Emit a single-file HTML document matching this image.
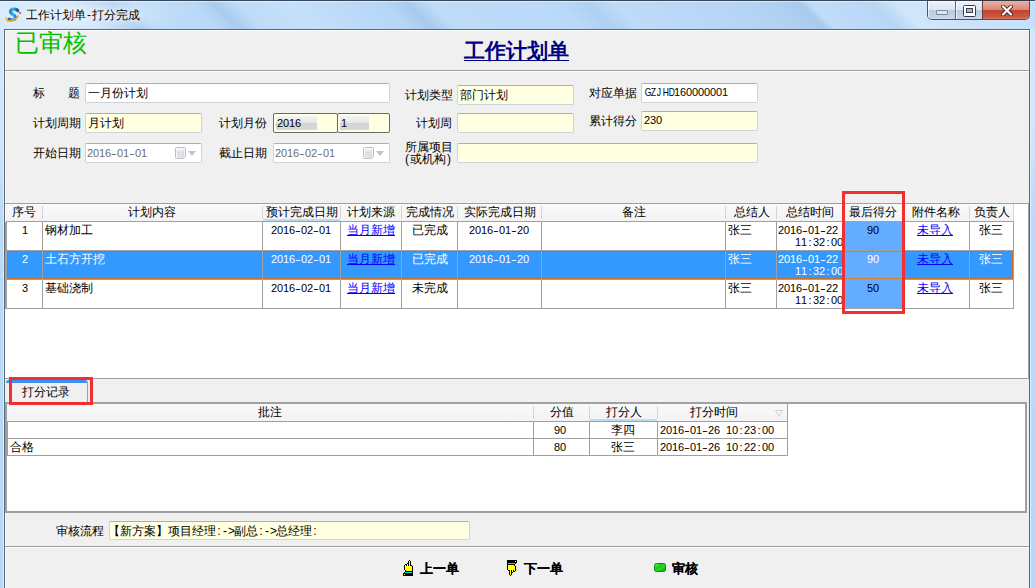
<!DOCTYPE html>
<html><head><meta charset="utf-8">
<style>
*{box-sizing:border-box;margin:0;padding:0}
html,body{width:1035px;height:588px;overflow:hidden}
body{position:relative;font-family:"Liberation Sans",sans-serif;font-size:12px;color:#000;
background:radial-gradient(ellipse 110px 22px at 80px 14px,rgba(255,255,255,.45),rgba(255,255,255,0)),linear-gradient(100deg,#d6e9fb 0px,#cde4fa 80px,#b3d3f2 112px,#a9cbee 128px,#bcdcf8 150px,#b8d8f6 208px,#a8caed 226px,#bddcf8 246px,#c3e0fa 300px,#b5d6f5 398px,#a6c9ec 418px,#bddcf8 440px,#b9d9f7 575px,#adcff0 598px,#bddcf8 622px,#b7d7f5 775px,#a5c8eb 805px,#c2dff9 835px,#d0e6fb 900px,#c3dff9 1035px);}
.a{position:absolute}
.t{position:absolute;font-size:12px;line-height:12px;white-space:nowrap}
.m{font-family:"Liberation Sans",sans-serif;font-size:11px;margin-top:-2px}
.m i{display:inline-block;width:6px;text-align:center;font-style:normal}
.m i.h{transform:scaleX(1.6)}
.m i.u{transform:scaleX(.78)}
.box{position:absolute;border:1px solid #ccd3dc;border-top-color:#a9b0b8;border-radius:2px;background:#fff}
.yel{background:#ffffe1}
.hl{position:absolute;height:1px;background:#a0a0a0}
.vl{position:absolute;width:1px;background:#a0a0a0}
.link{color:#0000ff;text-decoration:underline}
</style></head><body>

<!-- window frame top -->
<div class="a" style="left:0;top:0;width:1035px;height:29px;background:radial-gradient(ellipse 110px 22px at 80px 14px,rgba(255,255,255,.45),rgba(255,255,255,0)),linear-gradient(45deg,#d6e9fb 10px,#cde4fa 67px,#b5d4f2 88px,#abcdef 98px,#bddcf8 113px,#b9d9f6 155px,#aacbee 169px,#bedcf8 185px,#c4e0fa 222px,#b6d6f5 289px,#a8caed 306px,#bedcf8 322px,#bad9f7 413px,#afd0f1 433px,#bedcf8 452px,#b4d3f2 554px,#a8caed 584px,#bfddf9 591px,#bcdaf7 618px,#b7d6f3 636px,#d0e6fa 653px,#c4dff9 742px)"></div>
<div class="a" style="left:0;top:0;width:1035px;height:1px;background:#37475a"></div>
<div class="a" style="left:0;top:1px;width:1035px;height:1px;background:rgba(255,255,255,.55)"></div>

<!-- title icon -->
<svg class="a" style="left:3px;top:5px" width="20" height="20" viewBox="0 0 20 20">
<defs><linearGradient id="sg" x1="0" y1="0" x2="1" y2="0"><stop offset="0" stop-color="#1a6fc0"/><stop offset=".45" stop-color="#3ab4f0"/><stop offset="1" stop-color="#0b4f9e"/></linearGradient></defs>
<path d="M14.6 5.4 C12.8 3.4 7.6 3.6 7.7 6.9 C7.8 9.7 12.6 9.7 12.4 12.5 C12.2 14.9 8.4 15.2 6.4 14.3" fill="none" stroke="url(#sg)" stroke-width="3.3" stroke-linecap="round"/>
<path d="M3.4 13 C3 17.2 9.5 17.2 15.4 11" fill="none" stroke="#f5a21e" stroke-width="1.6" stroke-linecap="round"/>
<path d="M16.5 7.5 L17 6.5 L17.5 7.5 L18.5 8 L17.5 8.5 L17 9.5 L16.5 8.5 L15.5 8Z" fill="#d81e1e"/>
</svg>
<div class="t" style="left:26px;top:9px;text-shadow:0 0 6px #fff,0 0 3px #fff">工作计划单<span style="display:inline-block;width:6px;text-align:center">-</span>打分完成</div>

<!-- window buttons -->
<div class="a" style="left:927px;top:0;width:103px;height:20px;border:1px solid #4a5566;border-top-color:#303a48;border-radius:0 0 5px 5px;overflow:hidden">
  <div class="a" style="left:0;top:0;width:28px;height:19px;background:linear-gradient(#edf2f9 0%,#dde6f1 45%,#b9cbe0 50%,#c4d5e8 85%,#d6e3f1 100%);border-right:1px solid #5d6a7b;box-shadow:inset 1px 1px 0 rgba(255,255,255,.7)"></div>
  <div class="a" style="left:8px;top:9px;width:12px;height:5px;background:#dfe6ee;border:1px solid #7d8a9c;border-radius:1px"></div>
  <div class="a" style="left:28px;top:0;width:27px;height:19px;background:linear-gradient(#edf2f9 0%,#dde6f1 45%,#b9cbe0 50%,#c4d5e8 85%,#d6e3f1 100%);border-right:1px solid #6b3a34;box-shadow:inset 1px 1px 0 rgba(255,255,255,.7)"></div>
  <svg class="a" style="left:35px;top:4px" width="13" height="12" viewBox="0 0 13 12"><rect x="0.5" y="0.5" width="12" height="11" rx="1" fill="#fff" stroke="#353f4d"/><rect x="3.5" y="3.5" width="6" height="4" fill="#a8bad0" stroke="#353f4d"/></svg>
  <div class="a" style="left:55px;top:0;width:48px;height:19px;background:linear-gradient(#eab0a4 0%,#dc8a78 45%,#c3432c 50%,#cc5a44 85%,#de8a76 100%)"></div>
  <svg class="a" style="left:73px;top:4px" width="12" height="11" viewBox="0 0 12 11"><path d="M2 1.5 L10 9.5 M10 1.5 L2 9.5" stroke="#4a2a2a" stroke-width="4" stroke-linecap="round"/><path d="M2 1.5 L10 9.5 M10 1.5 L2 9.5" stroke="#fff" stroke-width="2.2" stroke-linecap="round"/></svg>
</div>

<!-- client area -->
<div class="a" style="left:0;top:29px;width:3px;height:559px;background:linear-gradient(#d4e8fc 0px,#cfe5fa 120px,#bfdcf9 165px,#b9d9f8 260px,#b8d8f8 559px)"></div>
<div class="a" style="left:3px;top:29px;width:1px;height:559px;background:#dcefff"></div>
<div class="a" style="left:1030px;top:29px;width:1px;height:559px;background:#dcefff"></div>
<div class="a" style="left:1031px;top:29px;width:4px;height:559px;background:linear-gradient(#d4e8fc 0px,#cfe5fa 120px,#bfdcf9 165px,#b9d9f8 260px,#b8d8f8 559px)"></div>
<div class="a" style="left:4px;top:29px;width:1026px;height:560px;background:#f0f0f0;border:1px solid #5b6878;border-bottom:none"></div>


<!-- header panel -->
<div class="a" style="left:5px;top:30px;width:1024px;height:1px;background:#fff"></div>
<div class="a" style="left:5px;top:30px;width:1px;height:558px;background:#fff"></div>
<div class="t" style="left:15px;top:31px;font-size:24px;line-height:24px;font-weight:300;color:#00c000">已审核</div>
<div class="t" style="left:464px;top:40px;font-size:21px;line-height:21px;font-weight:bold;color:#000080;text-decoration:underline;text-decoration-thickness:1px;text-underline-offset:2px">工作计划单</div>
<div class="hl" style="left:5px;top:70px;width:1024px"></div>
<div class="a" style="left:5px;top:71px;width:1024px;height:1px;background:#fff"></div>

<!-- form row 1 -->
<div class="t" style="left:33px;top:87px">标</div><div class="t" style="left:68px;top:87px">题</div>
<div class="box" style="left:85px;top:83px;width:305px;height:20px"></div>
<div class="t" style="left:88px;top:87px">一月份计划</div>
<div class="t" style="left:405px;top:89px">计划类型</div>
<div class="box yel" style="left:457px;top:85px;width:117px;height:20px"></div>
<div class="t" style="left:460px;top:89px">部门计划</div>
<div class="t" style="left:589px;top:87px">对应单据</div>
<div class="box" style="left:641px;top:83px;width:117px;height:20px"></div>
<div class="t m" style="left:644px;top:88px"><i class="u">G</i><i class="u">Z</i><i class="u">J</i><i class="u">H</i><i class="u">D</i><i>1</i><i>6</i><i>0</i><i>0</i><i>0</i><i>0</i><i>0</i><i>0</i><i>1</i></div>

<!-- form row 2 -->
<div class="t" style="left:33px;top:117px">计划周期</div>
<div class="box yel" style="left:85px;top:113px;width:117px;height:20px"></div>
<div class="t" style="left:88px;top:117px">月计划</div>
<div class="t" style="left:219px;top:117px">计划月份</div>
<div class="a" style="left:273px;top:113px;width:65px;height:20px;background:#ffffe1;border:1px solid #6a6a6a;border-radius:2px"></div>
<div class="a" style="left:276px;top:116px;width:41px;height:14px;background:linear-gradient(#f3f3f3 0%,#e6e6e6 50%,#d2d2d2 51%,#dadada 100%)"></div>
<div class="t m" style="left:277px;top:119px"><i>2</i><i>0</i><i>1</i><i>6</i></div>
<div class="a" style="left:337px;top:113px;width:53px;height:20px;background:#ffffe1;border:1px solid #6a6a6a;border-radius:2px"></div>
<div class="a" style="left:340px;top:116px;width:29px;height:14px;background:linear-gradient(#f3f3f3 0%,#e6e6e6 50%,#d2d2d2 51%,#dadada 100%)"></div>
<div class="t m" style="left:341px;top:119px"><i>1</i></div>
<div class="t" style="left:416px;top:117px">计划周</div>
<div class="box yel" style="left:457px;top:113px;width:117px;height:20px"></div>
<div class="t" style="left:589px;top:115px">累计得分</div>
<div class="box yel" style="left:641px;top:111px;width:117px;height:20px"></div>
<div class="t m" style="left:644px;top:116px"><i>2</i><i>3</i><i>0</i></div>

<!-- form row 3 -->
<div class="t" style="left:33px;top:147px">开始日期</div>
<div class="box" style="left:85px;top:143px;width:117px;height:20px"></div>
<div class="t m" style="left:87px;top:149px;color:#6d6d6d"><i>2</i><i>0</i><i>1</i><i>6</i><i class="h">-</i><i>0</i><i>1</i><i class="h">-</i><i>0</i><i>1</i></div>
<svg class="a" style="left:175px;top:147px" width="12" height="13" viewBox="0 0 12 13"><path d="M1.5 0.5H9.5Q10.5 0.5 10.5 1.5V9L8.5 11.5H1.5Q0.5 11.5 0.5 10.5V1.5Q0.5 0.5 1.5 0.5Z" fill="#f2f6fd" stroke="#c4bdbd"/><rect x="2" y="3.5" width="7" height="7" fill="#d9dade"/><rect x="2.5" y="4" width="1" height="1" fill="#f8f8fa"/><rect x="2.5" y="6" width="1" height="1" fill="#f8f8fa"/><rect x="2.5" y="8" width="1" height="1" fill="#f8f8fa"/><rect x="4.5" y="4" width="1" height="1" fill="#f8f8fa"/><rect x="4.5" y="6" width="1" height="1" fill="#f8f8fa"/><rect x="4.5" y="8" width="1" height="1" fill="#f8f8fa"/><rect x="6.5" y="4" width="1" height="1" fill="#f8f8fa"/><rect x="6.5" y="6" width="1" height="1" fill="#f8f8fa"/><rect x="6.5" y="8" width="1" height="1" fill="#f8f8fa"/></svg>
<svg class="a" style="left:188px;top:151px" width="8" height="5"><path d="M0 0H8L4 5Z" fill="#c4c4bc"/></svg>
<div class="t" style="left:219px;top:147px">截止日期</div>
<div class="box" style="left:273px;top:143px;width:117px;height:20px"></div>
<div class="t m" style="left:275px;top:149px;color:#6d6d6d"><i>2</i><i>0</i><i>1</i><i>6</i><i class="h">-</i><i>0</i><i>2</i><i class="h">-</i><i>0</i><i>1</i></div>
<svg class="a" style="left:363px;top:147px" width="12" height="13" viewBox="0 0 12 13"><path d="M1.5 0.5H9.5Q10.5 0.5 10.5 1.5V9L8.5 11.5H1.5Q0.5 11.5 0.5 10.5V1.5Q0.5 0.5 1.5 0.5Z" fill="#f2f6fd" stroke="#c4bdbd"/><rect x="2" y="3.5" width="7" height="7" fill="#d9dade"/><rect x="2.5" y="4" width="1" height="1" fill="#f8f8fa"/><rect x="2.5" y="6" width="1" height="1" fill="#f8f8fa"/><rect x="2.5" y="8" width="1" height="1" fill="#f8f8fa"/><rect x="4.5" y="4" width="1" height="1" fill="#f8f8fa"/><rect x="4.5" y="6" width="1" height="1" fill="#f8f8fa"/><rect x="4.5" y="8" width="1" height="1" fill="#f8f8fa"/><rect x="6.5" y="4" width="1" height="1" fill="#f8f8fa"/><rect x="6.5" y="6" width="1" height="1" fill="#f8f8fa"/><rect x="6.5" y="8" width="1" height="1" fill="#f8f8fa"/></svg>
<svg class="a" style="left:376px;top:151px" width="8" height="5"><path d="M0 0H8L4 5Z" fill="#c4c4bc"/></svg>
<div class="t" style="left:405px;top:141px;line-height:12px">所属项目</div>
<div class="t" style="left:404px;top:153px;line-height:12px"><span style="display:inline-block;width:6px;text-align:center">(</span>或机构<span style="display:inline-block;width:6px;text-align:center">)</span></div>
<div class="box yel" style="left:457px;top:143px;width:301px;height:20px"></div>

<div class="a" style="left:5px;top:203px;width:1024px;height:175px;background:#fff"></div>
<div class="hl" style="left:5px;top:203px;width:1024px"></div>
<div class="a" style="left:6px;top:204px;width:1008px;height:17px;background:linear-gradient(#f9f9f9,#f3f3f3)"></div>
<div class="hl" style="left:6px;top:221px;width:1008px"></div>
<div class="a" style="left:263px;top:219px;width:77px;height:2px;background:#bcdcf4"></div>
<div class="t" style="left:12px;top:206px">序号</div>
<div class="t" style="left:128px;top:206px">计划内容</div>
<div class="vl" style="left:42px;top:206px;height:13px;background:#d5d5d5"></div>
<div class="t" style="left:266px;top:206px">预计完成日期</div>
<div class="vl" style="left:262px;top:206px;height:13px;background:#d5d5d5"></div>
<div class="t" style="left:347px;top:206px">计划来源</div>
<div class="vl" style="left:340px;top:206px;height:13px;background:#d5d5d5"></div>
<div class="t" style="left:406px;top:206px">完成情况</div>
<div class="vl" style="left:401px;top:206px;height:13px;background:#d5d5d5"></div>
<div class="t" style="left:464px;top:206px">实际完成日期</div>
<div class="vl" style="left:457px;top:206px;height:13px;background:#d5d5d5"></div>
<div class="t" style="left:622px;top:206px">备注</div>
<div class="vl" style="left:541px;top:206px;height:13px;background:#d5d5d5"></div>
<div class="t" style="left:734px;top:206px">总结人</div>
<div class="vl" style="left:725px;top:206px;height:13px;background:#d5d5d5"></div>
<div class="t" style="left:786px;top:206px">总结时间</div>
<div class="vl" style="left:776px;top:206px;height:13px;background:#d5d5d5"></div>
<div class="t" style="left:849px;top:206px">最后得分</div>
<div class="vl" style="left:842px;top:206px;height:13px;background:#d5d5d5"></div>
<div class="t" style="left:912px;top:206px">附件名称</div>
<div class="vl" style="left:903px;top:206px;height:13px;background:#d5d5d5"></div>
<div class="t" style="left:974px;top:206px">负责人</div>
<div class="vl" style="left:969px;top:206px;height:13px;background:#d5d5d5"></div>
<div class="vl" style="left:1013px;top:204px;height:17px;background:#d5d5d5"></div>
<div class="a" style="left:5px;top:222px;width:2px;height:87px;background:#a0a0a0"></div>
<div class="a" style="left:846px;top:222px;width:56px;height:86px;background:#63acff"></div>
<div class="a" style="left:7px;top:251px;width:1006px;height:28px;background:#3399ff"></div>
<div class="a" style="left:846px;top:251px;width:56px;height:28px;background:#63acff"></div>
<div class="a" style="left:7px;top:251px;width:1006px;height:28px;border:1px dotted #c86a1e"></div>
<div class="hl" style="left:7px;top:308px;width:1007px"></div>
<div class="hl" style="left:7px;top:250px;width:1007px"></div>
<div class="hl" style="left:7px;top:279px;width:1007px"></div>
<div class="vl" style="left:42px;top:222px;height:86px"></div>
<div class="vl" style="left:262px;top:222px;height:86px"></div>
<div class="vl" style="left:340px;top:222px;height:86px"></div>
<div class="vl" style="left:401px;top:222px;height:86px"></div>
<div class="vl" style="left:457px;top:222px;height:86px"></div>
<div class="vl" style="left:541px;top:222px;height:86px"></div>
<div class="vl" style="left:725px;top:222px;height:86px"></div>
<div class="vl" style="left:776px;top:222px;height:86px"></div>
<div class="vl" style="left:845px;top:222px;height:86px"></div>
<div class="vl" style="left:902px;top:222px;height:86px"></div>
<div class="vl" style="left:969px;top:222px;height:86px"></div>
<div class="vl" style="left:1013px;top:222px;height:87px"></div>
<div class="t m" style="left:22px;top:226px;color:#000"><i>1</i></div>
<div class="t" style="left:45px;top:224px;color:#000">钢材加工</div>
<div class="t m" style="left:271px;top:226px;color:#000"><i>2</i><i>0</i><i>1</i><i>6</i><i class="h">-</i><i>0</i><i>2</i><i class="h">-</i><i>0</i><i>1</i></div>
<div class="t link" style="left:347px;top:224px">当月新增</div>
<div class="t" style="left:412px;top:224px;color:#000">已完成</div>
<div class="t m" style="left:469px;top:226px;color:#000"><i>2</i><i>0</i><i>1</i><i>6</i><i class="h">-</i><i>0</i><i>1</i><i class="h">-</i><i>2</i><i>0</i></div>
<div class="t" style="left:728px;top:224px;color:#000">张三</div>
<div class="t m" style="left:778px;top:226px;color:#000"><i>2</i><i>0</i><i>1</i><i>6</i><i class="h">-</i><i>0</i><i>1</i><i class="h">-</i><i>2</i><i>2</i></div>
<div class="t m" style="left:795px;top:238px;color:#000"><i>1</i><i>1</i><i>:</i><i>3</i><i>2</i><i>:</i><i>0</i><i>0</i></div>
<div class="t m" style="left:867px;top:226px;color:#000"><i>9</i><i>0</i></div>
<div class="t link" style="left:917px;top:224px">未导入</div>
<div class="t" style="left:979px;top:224px;color:#000">张三</div>
<div class="t m" style="left:22px;top:255px;color:#fff"><i>2</i></div>
<div class="t" style="left:45px;top:253px;color:#fff">土石方开挖</div>
<div class="t m" style="left:271px;top:255px;color:#fff"><i>2</i><i>0</i><i>1</i><i>6</i><i class="h">-</i><i>0</i><i>2</i><i class="h">-</i><i>0</i><i>1</i></div>
<div class="t link" style="left:347px;top:253px">当月新增</div>
<div class="t" style="left:412px;top:253px;color:#fff">已完成</div>
<div class="t m" style="left:469px;top:255px;color:#fff"><i>2</i><i>0</i><i>1</i><i>6</i><i class="h">-</i><i>0</i><i>1</i><i class="h">-</i><i>2</i><i>0</i></div>
<div class="t" style="left:728px;top:253px;color:#fff">张三</div>
<div class="t m" style="left:778px;top:255px;color:#fff"><i>2</i><i>0</i><i>1</i><i>6</i><i class="h">-</i><i>0</i><i>1</i><i class="h">-</i><i>2</i><i>2</i></div>
<div class="t m" style="left:795px;top:267px;color:#fff"><i>1</i><i>1</i><i>:</i><i>3</i><i>2</i><i>:</i><i>0</i><i>0</i></div>
<div class="t m" style="left:867px;top:255px;color:#fff"><i>9</i><i>0</i></div>
<div class="t link" style="left:917px;top:253px">未导入</div>
<div class="t" style="left:979px;top:253px;color:#fff">张三</div>
<div class="t m" style="left:22px;top:284px;color:#000"><i>3</i></div>
<div class="t" style="left:45px;top:282px;color:#000">基础浇制</div>
<div class="t m" style="left:271px;top:284px;color:#000"><i>2</i><i>0</i><i>1</i><i>6</i><i class="h">-</i><i>0</i><i>2</i><i class="h">-</i><i>0</i><i>1</i></div>
<div class="t link" style="left:347px;top:282px">当月新增</div>
<div class="t" style="left:412px;top:282px;color:#000">未完成</div>
<div class="t" style="left:728px;top:282px;color:#000">张三</div>
<div class="t m" style="left:778px;top:284px;color:#000"><i>2</i><i>0</i><i>1</i><i>6</i><i class="h">-</i><i>0</i><i>1</i><i class="h">-</i><i>2</i><i>2</i></div>
<div class="t m" style="left:795px;top:296px;color:#000"><i>1</i><i>1</i><i>:</i><i>3</i><i>2</i><i>:</i><i>0</i><i>0</i></div>
<div class="t m" style="left:867px;top:284px;color:#000"><i>5</i><i>0</i></div>
<div class="t link" style="left:917px;top:282px">未导入</div>
<div class="t" style="left:979px;top:282px;color:#000">张三</div>
<div class="a" style="left:842px;top:191px;width:63px;height:123px;border:3px solid #f03030;z-index:5"></div>
<div class="hl" style="left:5px;top:378px;width:1024px"></div>
<div class="vl" style="left:1028px;top:203px;height:175px"></div>
<div class="a" style="left:5px;top:379px;width:1024px;height:24px;background:#f0f0f0"></div>
<div class="a" style="left:6px;top:380px;width:82px;height:23px;background:#f0f0f0;border-right:1px solid #a0a0a0;border-top-left-radius:3px;border-top-right-radius:3px;overflow:hidden"><div class="a" style="left:0;top:0;width:82px;height:3px;background:#3c8ff0"></div></div>
<div class="t" style="left:22px;top:386px">打分记录</div>
<div class="a" style="left:9px;top:377px;width:84px;height:28px;border:3px solid #f03030;z-index:5"></div>
<div class="a" style="left:5px;top:402px;width:1022px;height:111px;background:#fff;border:2px solid #a0a0a0"></div>
<div class="a" style="left:7px;top:404px;width:780px;height:17px;background:linear-gradient(#f9f9f9,#f3f3f3)"></div>
<div class="hl" style="left:7px;top:421px;width:780px"></div>
<div class="a" style="left:590px;top:419px;width:67px;height:2px;background:#bcdcf4"></div>
<div class="t" style="left:258px;top:406px">批注</div>
<div class="t" style="left:550px;top:406px">分值</div>
<div class="vl" style="left:533px;top:406px;height:13px;background:#d5d5d5"></div>
<div class="t" style="left:606px;top:406px">打分人</div>
<div class="vl" style="left:589px;top:406px;height:13px;background:#d5d5d5"></div>
<div class="t" style="left:690px;top:406px">打分时间</div>
<div class="vl" style="left:657px;top:406px;height:13px;background:#d5d5d5"></div>
<svg class="a" style="left:775px;top:410px" width="8" height="7"><path d="M0.5 0.5H7.5L4 6.5Z" fill="none" stroke="#cfcfcf"/></svg>
<div class="vl" style="left:787px;top:404px;height:52px"></div>
<div class="hl" style="left:7px;top:438px;width:780px"></div>
<div class="vl" style="left:7px;top:421px;height:35px"></div>
<div class="hl" style="left:7px;top:455px;width:781px"></div>
<div class="vl" style="left:533px;top:422px;height:33px"></div>
<div class="vl" style="left:589px;top:422px;height:33px"></div>
<div class="vl" style="left:657px;top:422px;height:33px"></div>
<div class="t m" style="left:554px;top:426px"><i>9</i><i>0</i></div>
<div class="t" style="left:611px;top:424px">李四</div>
<div class="t m" style="left:660px;top:426px"><i>2</i><i>0</i><i>1</i><i>6</i><i class="h">-</i><i>0</i><i>1</i><i class="h">-</i><i>2</i><i>6</i><i>&nbsp;</i><i>1</i><i>0</i><i>:</i><i>2</i><i>3</i><i>:</i><i>0</i><i>0</i></div>
<div class="t" style="left:10px;top:441px">合格</div>
<div class="t m" style="left:554px;top:443px"><i>8</i><i>0</i></div>
<div class="t" style="left:611px;top:441px">张三</div>
<div class="t m" style="left:660px;top:443px"><i>2</i><i>0</i><i>1</i><i>6</i><i class="h">-</i><i>0</i><i>1</i><i class="h">-</i><i>2</i><i>6</i><i>&nbsp;</i><i>1</i><i>0</i><i>:</i><i>2</i><i>2</i><i>:</i><i>0</i><i>0</i></div>
<div class="t" style="left:56px;top:525px">审核流程</div>
<div class="box yel" style="left:109px;top:521px;width:361px;height:19px"></div>
<div class="t" style="left:108px;top:525px">【新方案】项目经理<span style="display:inline-block;width:6px;text-align:center">:</span><span style="display:inline-block;width:6px;text-align:center">-</span><span style="display:inline-block;width:6px;text-align:center">&gt;</span>副总<span style="display:inline-block;width:6px;text-align:center">:</span><span style="display:inline-block;width:6px;text-align:center">-</span><span style="display:inline-block;width:6px;text-align:center">&gt;</span>总经理<span style="display:inline-block;width:6px;text-align:center">:</span></div>
<div class="hl" style="left:5px;top:546px;width:1024px"></div>
<div class="a" style="left:5px;top:547px;width:1024px;height:1px;background:#fff"></div>
<svg class="a" style="left:403px;top:560px" width="11" height="16" viewBox="0 0 11 16" shape-rendering="crispEdges"><rect x="6" y="0" width="1" height="1" fill="#000"/><rect x="5" y="1" width="1" height="1" fill="#000"/><rect x="6" y="1" width="1" height="1" fill="#ffffff"/><rect x="7" y="1" width="1" height="1" fill="#000"/><rect x="5" y="2" width="1" height="1" fill="#000"/><rect x="6" y="2" width="1" height="1" fill="#ffff00"/><rect x="7" y="2" width="1" height="1" fill="#000"/><rect x="4" y="3" width="1" height="1" fill="#000"/><rect x="5" y="3" width="1" height="1" fill="#000"/><rect x="6" y="3" width="1" height="1" fill="#ffffff"/><rect x="7" y="3" width="1" height="1" fill="#000"/><rect x="2" y="4" width="1" height="1" fill="#000"/><rect x="3" y="4" width="1" height="1" fill="#000"/><rect x="4" y="4" width="1" height="1" fill="#ffff00"/><rect x="5" y="4" width="1" height="1" fill="#000"/><rect x="6" y="4" width="1" height="1" fill="#ffff00"/><rect x="7" y="4" width="1" height="1" fill="#000"/><rect x="1" y="5" width="1" height="1" fill="#000"/><rect x="2" y="5" width="1" height="1" fill="#ffffff"/><rect x="3" y="5" width="1" height="1" fill="#000"/><rect x="4" y="5" width="1" height="1" fill="#ffffff"/><rect x="5" y="5" width="1" height="1" fill="#000"/><rect x="6" y="5" width="1" height="1" fill="#ffffff"/><rect x="7" y="5" width="1" height="1" fill="#000"/><rect x="8" y="5" width="1" height="1" fill="#000"/><rect x="1" y="6" width="1" height="1" fill="#000"/><rect x="2" y="6" width="1" height="1" fill="#ffff00"/><rect x="3" y="6" width="1" height="1" fill="#ffff00"/><rect x="4" y="6" width="1" height="1" fill="#ffff00"/><rect x="5" y="6" width="1" height="1" fill="#ffff00"/><rect x="6" y="6" width="1" height="1" fill="#ffff00"/><rect x="7" y="6" width="1" height="1" fill="#ffff00"/><rect x="8" y="6" width="1" height="1" fill="#ffff00"/><rect x="9" y="6" width="1" height="1" fill="#000"/><rect x="1" y="7" width="1" height="1" fill="#000"/><rect x="2" y="7" width="1" height="1" fill="#ffffff"/><rect x="3" y="7" width="1" height="1" fill="#ffff00"/><rect x="4" y="7" width="1" height="1" fill="#ffffff"/><rect x="5" y="7" width="1" height="1" fill="#ffff00"/><rect x="6" y="7" width="1" height="1" fill="#ffffff"/><rect x="7" y="7" width="1" height="1" fill="#ffff00"/><rect x="8" y="7" width="1" height="1" fill="#ffffff"/><rect x="9" y="7" width="1" height="1" fill="#000"/><rect x="1" y="8" width="1" height="1" fill="#000"/><rect x="2" y="8" width="1" height="1" fill="#ffff00"/><rect x="3" y="8" width="1" height="1" fill="#ffff00"/><rect x="4" y="8" width="1" height="1" fill="#ffff00"/><rect x="5" y="8" width="1" height="1" fill="#ffff00"/><rect x="6" y="8" width="1" height="1" fill="#ffff00"/><rect x="7" y="8" width="1" height="1" fill="#ffff00"/><rect x="8" y="8" width="1" height="1" fill="#ffff00"/><rect x="9" y="8" width="1" height="1" fill="#000"/><rect x="1" y="9" width="1" height="1" fill="#000"/><rect x="2" y="9" width="1" height="1" fill="#ffffff"/><rect x="3" y="9" width="1" height="1" fill="#ffff00"/><rect x="4" y="9" width="1" height="1" fill="#ffffff"/><rect x="5" y="9" width="1" height="1" fill="#ffff00"/><rect x="6" y="9" width="1" height="1" fill="#ffffff"/><rect x="7" y="9" width="1" height="1" fill="#ffff00"/><rect x="8" y="9" width="1" height="1" fill="#ffffff"/><rect x="9" y="9" width="1" height="1" fill="#000"/><rect x="2" y="10" width="1" height="1" fill="#000"/><rect x="3" y="10" width="1" height="1" fill="#ffff00"/><rect x="4" y="10" width="1" height="1" fill="#ffff00"/><rect x="5" y="10" width="1" height="1" fill="#ffff00"/><rect x="6" y="10" width="1" height="1" fill="#ffff00"/><rect x="7" y="10" width="1" height="1" fill="#ffff00"/><rect x="8" y="10" width="1" height="1" fill="#ffff00"/><rect x="9" y="10" width="1" height="1" fill="#000"/><rect x="2" y="11" width="1" height="1" fill="#000"/><rect x="3" y="11" width="1" height="1" fill="#000"/><rect x="4" y="11" width="1" height="1" fill="#000"/><rect x="5" y="11" width="1" height="1" fill="#000"/><rect x="6" y="11" width="1" height="1" fill="#000"/><rect x="7" y="11" width="1" height="1" fill="#000"/><rect x="8" y="11" width="1" height="1" fill="#000"/><rect x="9" y="11" width="1" height="1" fill="#000"/><rect x="1" y="12" width="1" height="1" fill="#000"/><rect x="2" y="12" width="1" height="1" fill="#00e0f0"/><rect x="3" y="12" width="1" height="1" fill="#00e0f0"/><rect x="4" y="12" width="1" height="1" fill="#00e0f0"/><rect x="5" y="12" width="1" height="1" fill="#00e0f0"/><rect x="6" y="12" width="1" height="1" fill="#00e0f0"/><rect x="7" y="12" width="1" height="1" fill="#00e0f0"/><rect x="8" y="12" width="1" height="1" fill="#00e0f0"/><rect x="9" y="12" width="1" height="1" fill="#000"/><rect x="0" y="13" width="1" height="1" fill="#000"/><rect x="1" y="13" width="1" height="1" fill="#000"/><rect x="2" y="13" width="1" height="1" fill="#000"/><rect x="3" y="13" width="1" height="1" fill="#000"/><rect x="4" y="13" width="1" height="1" fill="#000"/><rect x="5" y="13" width="1" height="1" fill="#000"/><rect x="6" y="13" width="1" height="1" fill="#000"/><rect x="7" y="13" width="1" height="1" fill="#000"/><rect x="8" y="13" width="1" height="1" fill="#000"/><rect x="9" y="13" width="1" height="1" fill="#000"/><rect x="0" y="14" width="1" height="1" fill="#000"/><rect x="1" y="14" width="1" height="1" fill="#ffff00"/><rect x="2" y="14" width="1" height="1" fill="#000"/><rect x="3" y="14" width="1" height="1" fill="#000"/><rect x="4" y="14" width="1" height="1" fill="#000"/><rect x="5" y="14" width="1" height="1" fill="#000"/><rect x="6" y="14" width="1" height="1" fill="#000"/><rect x="7" y="14" width="1" height="1" fill="#000"/><rect x="8" y="14" width="1" height="1" fill="#000"/><rect x="9" y="14" width="1" height="1" fill="#000"/><rect x="0" y="15" width="1" height="1" fill="#000"/><rect x="1" y="15" width="1" height="1" fill="#000"/><rect x="2" y="15" width="1" height="1" fill="#000"/><rect x="3" y="15" width="1" height="1" fill="#000"/><rect x="4" y="15" width="1" height="1" fill="#000"/><rect x="5" y="15" width="1" height="1" fill="#000"/><rect x="6" y="15" width="1" height="1" fill="#000"/><rect x="7" y="15" width="1" height="1" fill="#000"/><rect x="8" y="15" width="1" height="1" fill="#000"/><rect x="9" y="15" width="1" height="1" fill="#000"/></svg>
<div class="t" style="left:420px;top:562px;font-size:13px;line-height:13px;font-weight:bold;text-shadow:0.4px 0 0 #000">上一单</div>
<svg class="a" style="left:506px;top:560px" width="11" height="16" viewBox="0 0 11 16" shape-rendering="crispEdges"><rect x="4" y="15" width="1" height="1" fill="#000"/><rect x="5" y="14" width="1" height="1" fill="#000"/><rect x="4" y="14" width="1" height="1" fill="#ffff00"/><rect x="3" y="14" width="1" height="1" fill="#000"/><rect x="5" y="13" width="1" height="1" fill="#000"/><rect x="4" y="13" width="1" height="1" fill="#ffffff"/><rect x="3" y="13" width="1" height="1" fill="#000"/><rect x="6" y="12" width="1" height="1" fill="#000"/><rect x="5" y="12" width="1" height="1" fill="#000"/><rect x="4" y="12" width="1" height="1" fill="#ffff00"/><rect x="3" y="12" width="1" height="1" fill="#000"/><rect x="8" y="11" width="1" height="1" fill="#000"/><rect x="7" y="11" width="1" height="1" fill="#000"/><rect x="6" y="11" width="1" height="1" fill="#ffffff"/><rect x="5" y="11" width="1" height="1" fill="#000"/><rect x="4" y="11" width="1" height="1" fill="#ffffff"/><rect x="3" y="11" width="1" height="1" fill="#000"/><rect x="9" y="10" width="1" height="1" fill="#000"/><rect x="8" y="10" width="1" height="1" fill="#ffff00"/><rect x="7" y="10" width="1" height="1" fill="#000"/><rect x="6" y="10" width="1" height="1" fill="#ffff00"/><rect x="5" y="10" width="1" height="1" fill="#000"/><rect x="4" y="10" width="1" height="1" fill="#ffff00"/><rect x="3" y="10" width="1" height="1" fill="#000"/><rect x="2" y="10" width="1" height="1" fill="#000"/><rect x="9" y="9" width="1" height="1" fill="#000"/><rect x="8" y="9" width="1" height="1" fill="#ffffff"/><rect x="7" y="9" width="1" height="1" fill="#ffff00"/><rect x="6" y="9" width="1" height="1" fill="#ffffff"/><rect x="5" y="9" width="1" height="1" fill="#ffff00"/><rect x="4" y="9" width="1" height="1" fill="#ffffff"/><rect x="3" y="9" width="1" height="1" fill="#ffff00"/><rect x="2" y="9" width="1" height="1" fill="#ffffff"/><rect x="1" y="9" width="1" height="1" fill="#000"/><rect x="9" y="8" width="1" height="1" fill="#000"/><rect x="8" y="8" width="1" height="1" fill="#ffff00"/><rect x="7" y="8" width="1" height="1" fill="#ffff00"/><rect x="6" y="8" width="1" height="1" fill="#ffff00"/><rect x="5" y="8" width="1" height="1" fill="#ffff00"/><rect x="4" y="8" width="1" height="1" fill="#ffff00"/><rect x="3" y="8" width="1" height="1" fill="#ffff00"/><rect x="2" y="8" width="1" height="1" fill="#ffff00"/><rect x="1" y="8" width="1" height="1" fill="#000"/><rect x="9" y="7" width="1" height="1" fill="#000"/><rect x="8" y="7" width="1" height="1" fill="#ffffff"/><rect x="7" y="7" width="1" height="1" fill="#ffff00"/><rect x="6" y="7" width="1" height="1" fill="#ffffff"/><rect x="5" y="7" width="1" height="1" fill="#ffff00"/><rect x="4" y="7" width="1" height="1" fill="#ffffff"/><rect x="3" y="7" width="1" height="1" fill="#ffff00"/><rect x="2" y="7" width="1" height="1" fill="#ffffff"/><rect x="1" y="7" width="1" height="1" fill="#000"/><rect x="9" y="6" width="1" height="1" fill="#000"/><rect x="8" y="6" width="1" height="1" fill="#ffff00"/><rect x="7" y="6" width="1" height="1" fill="#ffff00"/><rect x="6" y="6" width="1" height="1" fill="#ffff00"/><rect x="5" y="6" width="1" height="1" fill="#ffff00"/><rect x="4" y="6" width="1" height="1" fill="#ffff00"/><rect x="3" y="6" width="1" height="1" fill="#ffff00"/><rect x="2" y="6" width="1" height="1" fill="#ffff00"/><rect x="1" y="6" width="1" height="1" fill="#000"/><rect x="8" y="5" width="1" height="1" fill="#000"/><rect x="7" y="5" width="1" height="1" fill="#ffff00"/><rect x="6" y="5" width="1" height="1" fill="#ffffff"/><rect x="5" y="5" width="1" height="1" fill="#ffff00"/><rect x="4" y="5" width="1" height="1" fill="#ffffff"/><rect x="3" y="5" width="1" height="1" fill="#ffff00"/><rect x="2" y="5" width="1" height="1" fill="#ffffff"/><rect x="1" y="5" width="1" height="1" fill="#000"/><rect x="8" y="4" width="1" height="1" fill="#000"/><rect x="7" y="4" width="1" height="1" fill="#000"/><rect x="6" y="4" width="1" height="1" fill="#000"/><rect x="5" y="4" width="1" height="1" fill="#000"/><rect x="4" y="4" width="1" height="1" fill="#000"/><rect x="3" y="4" width="1" height="1" fill="#000"/><rect x="2" y="4" width="1" height="1" fill="#000"/><rect x="1" y="4" width="1" height="1" fill="#000"/><rect x="9" y="3" width="1" height="1" fill="#000"/><rect x="8" y="3" width="1" height="1" fill="#00e0f0"/><rect x="7" y="3" width="1" height="1" fill="#00e0f0"/><rect x="6" y="3" width="1" height="1" fill="#00e0f0"/><rect x="5" y="3" width="1" height="1" fill="#00e0f0"/><rect x="4" y="3" width="1" height="1" fill="#00e0f0"/><rect x="3" y="3" width="1" height="1" fill="#00e0f0"/><rect x="2" y="3" width="1" height="1" fill="#00e0f0"/><rect x="1" y="3" width="1" height="1" fill="#000"/><rect x="10" y="2" width="1" height="1" fill="#000"/><rect x="9" y="2" width="1" height="1" fill="#000"/><rect x="8" y="2" width="1" height="1" fill="#000"/><rect x="7" y="2" width="1" height="1" fill="#000"/><rect x="6" y="2" width="1" height="1" fill="#000"/><rect x="5" y="2" width="1" height="1" fill="#000"/><rect x="4" y="2" width="1" height="1" fill="#000"/><rect x="3" y="2" width="1" height="1" fill="#000"/><rect x="2" y="2" width="1" height="1" fill="#000"/><rect x="1" y="2" width="1" height="1" fill="#000"/><rect x="10" y="1" width="1" height="1" fill="#000"/><rect x="9" y="1" width="1" height="1" fill="#ffff00"/><rect x="8" y="1" width="1" height="1" fill="#000"/><rect x="7" y="1" width="1" height="1" fill="#000"/><rect x="6" y="1" width="1" height="1" fill="#000"/><rect x="5" y="1" width="1" height="1" fill="#000"/><rect x="4" y="1" width="1" height="1" fill="#000"/><rect x="3" y="1" width="1" height="1" fill="#000"/><rect x="2" y="1" width="1" height="1" fill="#000"/><rect x="1" y="1" width="1" height="1" fill="#000"/><rect x="10" y="0" width="1" height="1" fill="#000"/><rect x="9" y="0" width="1" height="1" fill="#000"/><rect x="8" y="0" width="1" height="1" fill="#000"/><rect x="7" y="0" width="1" height="1" fill="#000"/><rect x="6" y="0" width="1" height="1" fill="#000"/><rect x="5" y="0" width="1" height="1" fill="#000"/><rect x="4" y="0" width="1" height="1" fill="#000"/><rect x="3" y="0" width="1" height="1" fill="#000"/><rect x="2" y="0" width="1" height="1" fill="#000"/><rect x="1" y="0" width="1" height="1" fill="#000"/></svg>
<div class="t" style="left:524px;top:562px;font-size:13px;line-height:13px;font-weight:bold;text-shadow:0.4px 0 0 #000">下一单</div>
<svg class="a" style="left:653px;top:562px" width="14" height="11" viewBox="0 0 14 11"><defs><linearGradient id="gg" x1="0" y1="0" x2="1" y2="1"><stop offset="0" stop-color="#5cf55c"/><stop offset=".45" stop-color="#14c814"/><stop offset=".55" stop-color="#30dc30"/><stop offset="1" stop-color="#009a00"/></linearGradient></defs><rect x="1.5" y="1.5" width="11" height="8" rx="2" fill="url(#gg)" stroke="#0a8a0a"/></svg>
<div class="t" style="left:672px;top:562px;font-size:13px;line-height:13px;font-weight:bold;text-shadow:0.4px 0 0 #000">审核</div>

</body></html>
